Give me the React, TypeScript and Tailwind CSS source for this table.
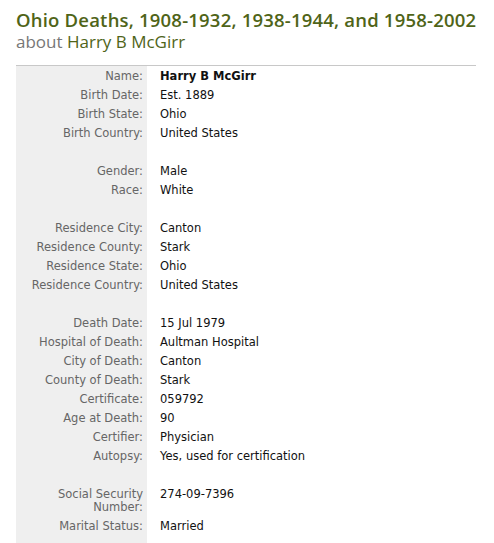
import React from "react";

type Row = [string, string] | null;

const rows: Row[] = [
  ["Name:", "Harry B McGirr"],
  ["Birth Date:", "Est. 1889"],
  ["Birth State:", "Ohio"],
  ["Birth Country:", "United States"],
  null,
  ["Gender:", "Male"],
  ["Race:", "White"],
  null,
  ["Residence City:", "Canton"],
  ["Residence County:", "Stark"],
  ["Residence State:", "Ohio"],
  ["Residence Country:", "United States"],
  null,
  ["Death Date:", "15 Jul 1979"],
  ["Hospital of Death:", "Aultman Hospital"],
  ["City of Death:", "Canton"],
  ["County of Death:", "Stark"],
  ["Certificate:", "059792"],
  ["Age at Death:", "90"],
  ["Certifier:", "Physician"],
  ["Autopsy:", "Yes, used for certification"],
  null,
  ["Social Security Number:", "274-09-7396"],
  ["Marital Status:", "Married"],
];

export default function App() {
  return (
    <div className="w-[494px] h-[543px] bg-white overflow-hidden" style={{ fontFamily: '"DejaVu Sans", Verdana, sans-serif' }}>
      <div className="pl-4 pt-[9px]">
        <h1 className="text-[18.5px] leading-[22px] font-semibold text-[#4f6418] tracking-[0.2px]" style={{ fontFamily: '"Open Sans", sans-serif' }}>
          Ohio Deaths, 1908-1932, 1938-1944, and 1958-2002
        </h1>
        <div className="text-[17px] leading-[22px] text-[#777]" style={{ fontFamily: '"Open Sans", sans-serif' }}>
          about <span className="text-[#4f6418]">Harry B McGirr</span>
        </div>
      </div>
      <div className="ml-4 mt-[12px] w-[460px] border-t border-[#c8c8c8]">
        <div className="grid grid-cols-[131px_1fr]">
          {rows.map((r, i) =>
            r === null ? (
              <React.Fragment key={i}>
                <div className="bg-[#efefef] h-[19px]" />
                <div className="h-[19px]" />
              </React.Fragment>
            ) : (
              <React.Fragment key={i}>
                <div className="bg-[#efefef] text-right pr-[4px] pt-[4px] pb-[2px] text-[11.5px] leading-[13px] text-[#666] pl-2">
                  {r[0]}
                </div>
                <div className={`pl-[13px] pt-[4px] pb-[2px] text-[11.5px] leading-[13px] text-[#111] ${i === 0 ? "font-bold" : ""}`}>
                  {r[1]}
                </div>
              </React.Fragment>
            )
          )}
          <div className="bg-[#efefef] h-[20px]" />
          <div />
        </div>
      </div>
    </div>
  );
}
